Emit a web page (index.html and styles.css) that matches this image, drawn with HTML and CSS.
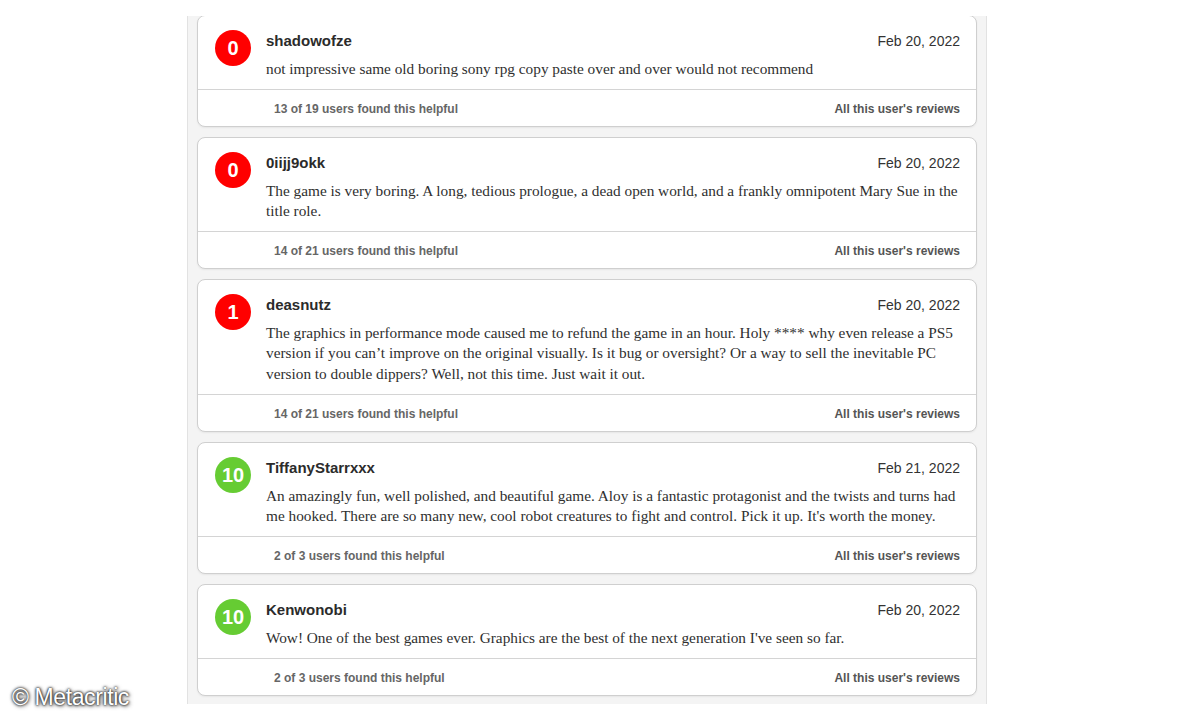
FILE: index.html
```html
<!DOCTYPE html>
<html lang="en">
<head>
<meta charset="utf-8">
<title>User Reviews</title>
<link rel="stylesheet" href="styles.css">
</head>
<body>
<main class="column">
  <article class="review">
    <div class="review-main">
      <div class="score score-red">0</div>
      <div class="review-content">
        <div class="review-head">
          <span class="author">shadowofze</span>
          <span class="date">Feb 20, 2022</span>
        </div>
        <p class="body">not impressive same old boring sony rpg copy paste over and over would not recommend</p>
      </div>
    </div>
    <div class="review-foot">
      <span class="helpful">13 of 19 users found this helpful</span>
      <span class="all">All this user's reviews</span>
    </div>
  </article>

  <article class="review">
    <div class="review-main">
      <div class="score score-red">0</div>
      <div class="review-content">
        <div class="review-head">
          <span class="author">0iijj9okk</span>
          <span class="date">Feb 20, 2022</span>
        </div>
        <p class="body">The game is very boring. A long, tedious prologue, a dead open world, and a frankly omnipotent Mary Sue in the title role.</p>
      </div>
    </div>
    <div class="review-foot">
      <span class="helpful">14 of 21 users found this helpful</span>
      <span class="all">All this user's reviews</span>
    </div>
  </article>

  <article class="review">
    <div class="review-main">
      <div class="score score-red">1</div>
      <div class="review-content">
        <div class="review-head">
          <span class="author">deasnutz</span>
          <span class="date">Feb 20, 2022</span>
        </div>
        <p class="body">The graphics in performance mode caused me to refund the game in an hour. Holy **** why even release a PS5 version if you can’t improve on the original visually. Is it bug or oversight? Or a way to sell the inevitable PC version to double dippers? Well, not this time. Just wait it out.</p>
      </div>
    </div>
    <div class="review-foot">
      <span class="helpful">14 of 21 users found this helpful</span>
      <span class="all">All this user's reviews</span>
    </div>
  </article>

  <article class="review">
    <div class="review-main">
      <div class="score score-green">10</div>
      <div class="review-content">
        <div class="review-head">
          <span class="author">TiffanyStarrxxx</span>
          <span class="date">Feb 21, 2022</span>
        </div>
        <p class="body">An amazingly fun, well polished, and beautiful game. Aloy is a fantastic protagonist and the twists and turns had me hooked. There are so many new, cool robot creatures to fight and control. Pick it up. It's worth the money.</p>
      </div>
    </div>
    <div class="review-foot">
      <span class="helpful">2 of 3 users found this helpful</span>
      <span class="all">All this user's reviews</span>
    </div>
  </article>

  <article class="review">
    <div class="review-main">
      <div class="score score-green">10</div>
      <div class="review-content">
        <div class="review-head">
          <span class="author">Kenwonobi</span>
          <span class="date">Feb 20, 2022</span>
        </div>
        <p class="body">Wow! One of the best games ever. Graphics are the best of the next generation I've seen so far.</p>
      </div>
    </div>
    <div class="review-foot">
      <span class="helpful">2 of 3 users found this helpful</span>
      <span class="all">All this user's reviews</span>
    </div>
  </article>
</main>
<div class="watermark">© Metacritic</div>
</body>
</html>
```

FILE: styles.css
```css
html, body {
  margin: 0;
  padding: 0;
  background: #ffffff;
}
body {
  width: 1200px;
  height: 720px;
  overflow: hidden;
  position: relative;
  font-family: "Liberation Sans", Arial, sans-serif;
  color: #333333;
}
.column {
  box-sizing: border-box;
  width: 800px;
  margin: 16px 0 0 187px;
  height: 688px;
  overflow: hidden;
  background: #f4f4f4;
  border-left: 1px solid #e2e2e2;
  border-right: 1px solid #e2e2e2;
  padding: 0 9px 0 9px;
  display: flex;
  flex-direction: column;
  gap: 10px;
}
.review {
  flex: none;
  background: #ffffff;
  border: 1px solid #cfcfcf;
  border-radius: 8px;
  box-shadow: 0 1px 2px rgba(0,0,0,0.06);
}
.review:first-child {
  margin-top: -1px;
}
.review-main {
  display: flex;
  gap: 15px;
  padding: 12px 16px 10px 17px;
  border-bottom: 1px solid #d4d4d4;
}
.score {
  flex: none;
  width: 36px;
  height: 36px;
  border-radius: 50%;
  color: #ffffff;
  font-weight: bold;
  font-size: 20px;
  display: flex;
  align-items: center;
  justify-content: center;
  margin-top: 2px;
}
.score-red { background: #ff0000; }
.score-green { background: #66cc33; }
.review-content {
  flex: 1;
  min-width: 0;
}
.review-head {
  display: flex;
  justify-content: space-between;
  align-items: baseline;
  height: 22px;
  line-height: 22px;
}
.author {
  font-weight: bold;
  font-size: 15px;
  color: #2b2b2b;
}
.date {
  font-size: 14px;
  color: #333333;
  padding-top: 2px;
}
.body {
  margin: 8.66px 0 0 0;
  font-family: "Liberation Serif", "Times New Roman", serif;
  font-size: 15.3px;
  line-height: 20.34px;
  color: #2f2f2f;
}
.review-foot {
  display: flex;
  justify-content: space-between;
  align-items: center;
  height: 34px;
  padding: 2px 16px 0 76px;
  font-size: 12px;
  font-weight: bold;
  color: #666666;
}
.all {
  color: #555555;
}
.watermark {
  position: absolute;
  left: 12px;
  top: 684px;
  font-family: "Liberation Sans", Arial, sans-serif;
  font-size: 23px;
  color: #ffffff;
  text-shadow: 0 0 2px #222, 0 0 3px #333, 1px 1px 4px #444;
  letter-spacing: -0.4px;
}
```
